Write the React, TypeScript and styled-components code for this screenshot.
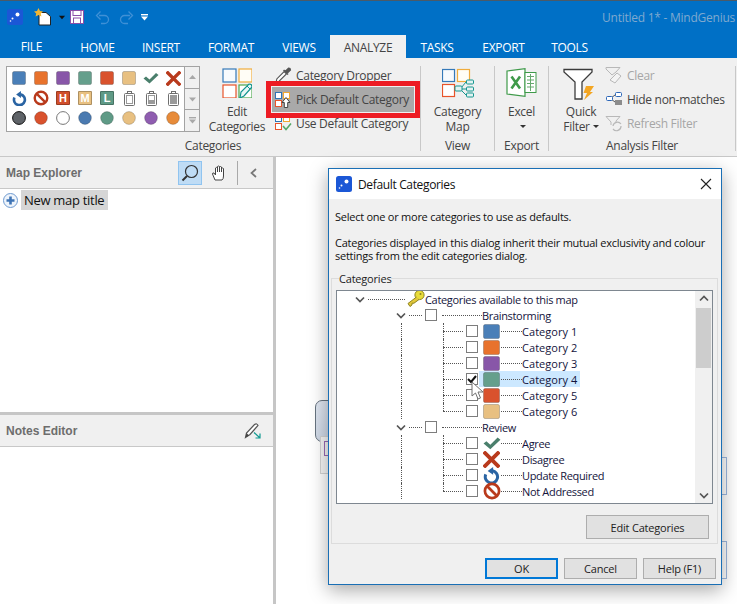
import React from 'react';
import styled, { createGlobalStyle } from 'styled-components';

const UI_FONT = '"Open Sans", "Noto Sans", "Liberation Sans", sans-serif';

// Colours
const BLUE = '#0070c6';
const PANEL = '#f0f0f0';
const RULE = '#c8c8c8';
const TEXT = '#444444';

const GlobalStyle = createGlobalStyle`
  html, body {
    margin: 0;
    padding: 0;
    background: #ffffff;
  }
  body {
    font-family: ${UI_FONT};
    font-size: 12px;
    overflow: hidden;
  }
`;

// Page frame
const Page = styled.div`
  width: 737px;
  height: 604px;
  display: flex;
  flex-direction: column;
  overflow: hidden;
`;

const TitleBar = styled.div`
  height: 35px;
  box-sizing: border-box;
  flex: none;
  background: ${BLUE};
  border-top: 1px solid #4a5a68;
  display: flex;
  align-items: center;
  padding: 0 2px 2px 7px;
`;

const QatSlot = styled.div<{ $w: number; $ml?: number }>`
  width: ${p => p.$w}px;
  margin-left: ${p => p.$ml ?? 0}px;
  display: flex;
  align-items: center;
  justify-content: center;
`;

const WindowTitle = styled.div`
  margin-left: auto;
  color: #7fa9cf;
  font-size: 12px;
  letter-spacing: -0.25px;
`;

const TabBar = styled.div`
  height: 23px;
  flex: none;
  background: ${BLUE};
  display: flex;
  padding-left: 8px;
`;

const Tab = styled.div<{ $active?: boolean; $w: number; $file?: boolean }>`
  width: ${p => p.$w}px;
  margin-right: ${p => (p.$file ? 12 : 0)}px;
  display: flex;
  align-items: center;
  justify-content: center;
  font-size: 12px;
  letter-spacing: -0.3px;
  padding: ${p => (p.$file ? '0 0 1px' : '1px 0 0')};
  color: ${p => (p.$active ? '#444' : '#fff')};
  background: ${p => (p.$active ? PANEL : 'transparent')};
`;

// Ribbon
const Ribbon = styled.div`
  height: 99px;
  flex: none;
  box-sizing: border-box;
  background: ${PANEL};
  border-bottom: 1px solid ${RULE};
  display: flex;
  padding: 8px 0 0 6px;
`;

const Group = styled.div<{ $w: number }>`
  width: ${p => p.$w}px;
  height: 85px;
  flex: none;
  display: flex;
  flex-direction: column;
  border-right: 1px solid ${RULE};
  box-sizing: border-box;
`;

const GroupBody = styled.div`
  height: 73px;
  flex: none;
  display: flex;
  align-items: flex-start;
`;

const GroupLabel = styled.div`
  text-align: center;
  font-size: 12px;
  letter-spacing: -0.3px;
  line-height: 14px;
  color: ${TEXT};
`;

const Gallery = styled.div`
  width: 194px;
  height: 66px;
  box-sizing: border-box;
  flex: none;
  border: 1px solid #a3a3a3;
  background: #fff;
  display: flex;
`;

const GalleryGrid = styled.div`
  display: grid;
  grid-template-columns: repeat(8, 22px);
  grid-auto-rows: 20px;
  padding: 1px 0 0 1px;
`;

const GalleryCell = styled.div`
  display: flex;
  align-items: center;
  justify-content: center;
`;

const GalleryScroll = styled.div`
  margin-left: auto;
  width: 15px;
  display: flex;
  flex-direction: column;
  background: ${PANEL};
  border-left: 1px solid #a3a3a3;
`;

const GalleryArrow = styled.div`
  flex: 1;
  display: flex;
  align-items: center;
  justify-content: center;
  color: #a8a8a8;
  & + & {
    border-top: 1px solid #a3a3a3;
  }
`;

const LargeButton = styled.div<{ $w: number; $ml?: number }>`
  width: ${p => p.$w}px;
  margin-left: ${p => p.$ml ?? 0}px;
  flex: none;
  display: flex;
  flex-direction: column;
  align-items: center;
  color: ${TEXT};
  font-size: 12px;
  letter-spacing: -0.3px;
  line-height: 15px;
`;

const LargeIcon = styled.div`
  height: 38px;
  box-sizing: border-box;
  padding-top: 2px;
  display: flex;
  align-items: flex-start;
  justify-content: center;
`;

const SmallColumn = styled.div<{ $w: number; $ml: number }>`
  width: ${p => p.$w}px;
  margin: -3px 0 0 ${p => p.$ml}px;
  display: flex;
  flex-direction: column;
`;

const SmallButton = styled.div<{ $disabled?: boolean; $marked?: boolean }>`
  height: 24px;
  box-sizing: border-box;
  display: flex;
  align-items: center;
  gap: 4px;
  padding-left: 3px;
  font-size: 12px;
  letter-spacing: -0.3px;
  white-space: nowrap;
  color: ${p => (p.$disabled ? '#a6a6a6' : TEXT)};
  ${p =>
    p.$marked &&
    `
    height: 27px;
    margin: -1px 0 -2px;
    padding-left: 2px;
    position: relative;
    z-index: 1;
    background: #a9a9a9;
    border: 1px solid #f0f0f0;
    box-shadow: 0 0 0 5px #ed1c24;
  `}
`;

const SmallIcon = styled.span`
  width: 18px;
  height: 18px;
  flex: none;
  display: flex;
  align-items: center;
  justify-content: center;
`;

const Caret = styled.span`
  display: inline-block;
  width: 0;
  height: 0;
  margin: 0 0 2px 3px;
  border: 3px solid transparent;
  border-top: 3px solid #333;
  border-bottom: 0;
  vertical-align: middle;
`;

// Work area
const Workspace = styled.div`
  flex: 1;
  min-height: 0;
  display: flex;
`;

const SidePanel = styled.div`
  width: 273px;
  flex: none;
  display: flex;
  flex-direction: column;
  border-right: 3px solid #c6c6c6;
`;

const PaneHeader = styled.div`
  height: 31px;
  flex: none;
  background: ${PANEL};
  border-bottom: 1px solid ${RULE};
  display: flex;
  align-items: center;
  padding-left: 6px;
`;

const PaneTitle = styled.div`
  font-family: "Liberation Sans", Arial, sans-serif;
  font-size: 12px;
  font-weight: 700;
  color: #6d6d6d;
`;

const ExplorerPane = styled.div`
  height: 255px;
  flex: none;
  background: #fff;
  border-bottom: 3px solid #c6c6c6;
`;

const ToolButton = styled.div<{ $active?: boolean; $ml: number }>`
  width: 24px;
  height: 24px;
  margin-left: ${p => p.$ml}px;
  box-sizing: border-box;
  display: flex;
  align-items: center;
  justify-content: center;
  border: 1px solid ${p => (p.$active ? '#90c4f0' : 'transparent')};
  background: ${p => (p.$active ? '#bfdcf5' : 'transparent')};
`;

const ToolDivider = styled.div`
  width: 1px;
  height: 24px;
  margin-left: 6px;
  background: #a9a9a9;
`;

const MapRow = styled.div`
  display: flex;
  align-items: center;
  height: 20px;
  margin-top: 1px;
  padding-left: 3px;
  gap: 3px;
`;

const MapLabel = styled.div`
  background: #d6d6d6;
  height: 20px;
  width: 87px;
  box-sizing: border-box;
  padding-left: 3px;
  font-size: 13px;
  letter-spacing: -0.3px;
  line-height: 20px;
  color: #111;
  white-space: nowrap;
`;

const Canvas = styled.div`
  flex: 1;
  position: relative;
  background: #fff;
`;

const MapNode = styled.div`
  position: absolute;
  left: 39px;
  top: 243px;
  width: 30px;
  height: 42px;
  box-sizing: border-box;
  border: 1px solid #67737f;
  border-radius: 7px;
  background: linear-gradient(#dfe6f1, #cfd8e6);
`;

const NodeNote = styled.div`
  position: absolute;
  left: 44px;
  top: 279px;
  width: 30px;
  height: 38px;
  box-sizing: border-box;
  border: 1px solid #d4d4d4;
  background: #f7f7f7;
  &::before {
    content: '';
    position: absolute;
    left: 3px;
    top: 4px;
    width: 10px;
    height: 13px;
    border: 1px solid #9a6bb5;
  }
`;

const SideNode = styled.div<{ $top: number }>`
  position: absolute;
  left: 430px;
  top: ${p => p.$top}px;
  width: 21px;
  height: 38px;
  box-sizing: border-box;
  border: 1px solid #9db9e0;
  border-left: 0;
  background: #fff;
`;

// Dialog
const Dialog = styled.div`
  position: absolute;
  left: 52px;
  top: 11px;
  width: 394px;
  height: 417px;
  box-sizing: border-box;
  border: 1px solid #1a6fb5;
  background: ${PANEL};
  box-shadow: 0 5px 18px rgba(0, 0, 0, 0.35);
  display: flex;
  flex-direction: column;
`;

const DialogTitle = styled.div`
  height: 30px;
  flex: none;
  background: #fff;
  display: flex;
  align-items: center;
  padding: 0 9px 0 7px;
  gap: 6px;
  font-size: 12px;
  letter-spacing: -0.35px;
  color: #111;
`;

const CloseButton = styled.div`
  margin-left: auto;
  display: flex;
`;

const DialogIntro = styled.p`
  margin: 11px 0 0 6px;
  font-size: 11px;
  letter-spacing: -0.25px;
  line-height: 13px;
  color: #111;
  white-space: pre-line;
`;

const CategoryBox = styled.fieldset`
  margin: 10px 3px 0 2px;
  padding: 0 4px 0 4px;
  height: 272px;
  flex: none;
  box-sizing: border-box;
  min-width: 0;
  border: 1px solid #dcdcdc;
  display: flex;
  flex-direction: column;
`;

const CategoryLegend = styled.legend`
  padding: 0;
  margin-left: 3px;
  font-size: 11px;
  letter-spacing: -0.2px;
  line-height: 13px;
  color: #222;
`;

const TreeFrame = styled.div`
  height: 214px;
  flex: none;
  box-sizing: border-box;
  margin-top: 5px;
  border: 1px solid #7e8790;
  background: #fff;
  display: flex;
  overflow: hidden;
  position: relative;
`;

const TreeBody = styled.div`
  flex: 1;
`;

const TreeRow = styled.div<{ $indent: number; $guides?: boolean; $last?: boolean }>`
  position: relative;
  height: 16px;
  display: flex;
  align-items: center;
  padding-left: ${p => p.$indent}px;
  font-size: 11px;
  letter-spacing: -0.33px;
  color: #14143c;
  white-space: nowrap;
  ${p =>
    p.$guides &&
    `
    &::before, &::after {
      content: '';
      position: absolute;
      top: 0;
      border-left: 1px dotted #555;
    }
    &::before {
      left: 64px;
      height: 16px;
    }
    &::after {
      left: 106px;
      height: ${p.$last ? 8 : 16}px;
    }
  `}
`;

const Dots = styled.span<{ $w: number; $ml?: number }>`
  flex: none;
  width: ${p => p.$w}px;
  margin-left: ${p => p.$ml ?? 0}px;
  border-top: 1px dotted #555;
`;

const Check = styled.span<{ $ml: number }>`
  flex: none;
  width: 12px;
  height: 12px;
  margin-left: ${p => p.$ml}px;
  box-sizing: border-box;
  border: 1px solid #7d7d7d;
  background: #fff;
  display: flex;
  align-items: center;
  justify-content: center;
  position: relative;
  z-index: 1;
`;

const RowItem = styled.span<{ $selected?: boolean }>`
  display: flex;
  align-items: center;
  height: 16px;
  margin-left: 1px;
  padding: 0 3px 0 4px;
  background: ${p => (p.$selected ? '#cce8ff' : 'transparent')};
`;

const RowIcon = styled.span`
  width: 17px;
  height: 16px;
  flex: none;
  display: flex;
  align-items: center;
  justify-content: center;
`;

const LeafLabel = styled.span<{ $wide?: boolean }>`
  letter-spacing: ${p => (p.$wide ? '0.05px' : '-0.33px')};
`;

const KeySlot = styled.span`
  margin: -2px 0 0 2px;
  flex: none;
  display: flex;
`;

const CursorMark = styled.div`
  position: absolute;
  left: 134px;
  top: 90px;
  z-index: 2;
  display: flex;
`;

const TreeScroll = styled.div`
  width: 17px;
  flex: none;
  background: ${PANEL};
  display: flex;
  flex-direction: column;
  align-items: center;
  color: #555;
`;

const TreeThumb = styled.div`
  width: 15px;
  height: 60px;
  margin-top: 2px;
  background: #cdcdcd;
`;

const ScrollEnd = styled.div<{ $bottom?: boolean }>`
  height: 15px;
  display: flex;
  align-items: center;
  justify-content: center;
  margin-top: ${p => (p.$bottom ? 'auto' : 0)};
`;

const DialogButton = styled.div<{ $w: number; $h?: number; $default?: boolean }>`
  width: ${p => p.$w}px;
  height: ${p => p.$h ?? 21}px;
  box-sizing: border-box;
  flex: none;
  display: flex;
  align-items: center;
  justify-content: center;
  background: #e1e1e1;
  border: ${p => (p.$default ? '2px solid #0078d7' : '1px solid #adadad')};
  font-size: 11px;
  letter-spacing: -0.2px;
  color: #222;
`;

const EditRow = styled.div`
  display: flex;
  justify-content: flex-end;
  margin: 11px 4px 0 0;
`;

const DialogFooter = styled.div`
  display: flex;
  justify-content: flex-end;
  gap: 6px;
  margin: 14px 5px 0 0;
`;

// Icons
const Svg: React.FC<{ s: number; h?: number; children: React.ReactNode }> = ({ s, h, children }) => (
  <svg width={s} height={h ?? s} viewBox={`0 0 ${s} ${h ?? s}`} style={{ display: 'block' }}>
    {children}
  </svg>
);

const Glyph: React.FC<{ size: number; children: React.ReactNode }> = ({ size, children }) => (
  <svg width={size} height={size} viewBox="0 0 16 16" style={{ display: 'block', flex: 'none' }}>
    {children}
  </svg>
);

const AppLogo: React.FC<{ s: number }> = ({ s }) => (
  <Glyph size={s}>
    <rect width="16" height="16" rx="2.5" fill="#1b57d6" />
    <circle cx="10.5" cy="5.5" r="2" fill="#fff" />
    <circle cx="5.5" cy="9.5" r="1" fill="#fff" />
    <circle cx="3.5" cy="12" r="0.8" fill="#fff" />
  </Glyph>
);

const Swatch: React.FC<{ color: string; w?: number; h?: number }> = ({ color, w = 14, h = 14 }) => (
  <Svg s={w} h={h}>
    <rect x="0.5" y="0.5" width={w - 1} height={h - 1} rx="1.5" fill={color} stroke="#00000033" />
  </Svg>
);

const Tick: React.FC<{ size?: number }> = ({ size = 16 }) => (
  <Glyph size={size}>
    <path d="M0.5 8.5 L3 6.5 L6.5 9.5 L13 3 L15.5 5 L6.5 13.5 Z" fill="#4a7f6c" />
  </Glyph>
);

const Cross: React.FC<{ size?: number }> = ({ size = 15 }) => (
  <Glyph size={size}>
    <path d="M2 2 L14 14 M14 2 L2 14" stroke="#b93a1c" strokeWidth="3.6" strokeLinecap="square" />
  </Glyph>
);

const Redo: React.FC<{ size?: number }> = ({ size = 15 }) => (
  <Glyph size={size}>
    <path d="M2.6 7 A5.8 5.8 0 1 0 9 3.6" fill="none" stroke="#2a64a3" strokeWidth="2.8" />
    <path d="M9.5 0 L9.5 7.4 L4.4 3.7 Z" fill="#2a64a3" />
  </Glyph>
);

const NoEntry: React.FC<{ size?: number }> = ({ size = 16 }) => (
  <Glyph size={size}>
    <circle cx="8" cy="8" r="6.3" fill="#fff" stroke="#b93a1c" strokeWidth="2.4" />
    <path d="M3.6 3.6 L12.4 12.4" stroke="#b93a1c" strokeWidth="2.4" />
  </Glyph>
);

const LetterBadge = styled.span<{ $bg: string }>`
  width: 14px;
  height: 14px;
  display: flex;
  align-items: center;
  justify-content: center;
  box-sizing: border-box;
  border: 1px solid #00000040;
  border-radius: 1px;
  background: ${p => p.$bg};
  color: #fff;
  font-family: "Liberation Sans", Arial, sans-serif;
  font-size: 11px;
  font-weight: 700;
`;

const Battery: React.FC<{ level: number }> = ({ level }) => (
  <Svg s={11} h={15}>
    <rect x="3.5" y="0.5" width="4" height="2" fill="#fff" stroke="#6f6f6f" />
    <rect x="0.5" y="2.5" width="10" height="12" rx="1" fill="#fff" stroke="#6f6f6f" />
    <rect x="2.5" y="4.5" width="6" height="8" fill="#fff" stroke="#9a9a9a" />
    {level > 0 && <rect x="3" y={13 - 8 * level} width="5" height={8 * level - 0.5} fill="#9a9a9a" />}
  </Svg>
);

const Dot: React.FC<{ color: string; ring?: string }> = ({ color, ring }) => (
  <Svg s={14}>
    <circle cx="7" cy="7" r="6.4" fill={color} stroke={ring ?? '#00000030'} />
  </Svg>
);

const SmallArrow: React.FC<{ up?: boolean; bar?: boolean; color?: string }> = ({ up, bar, color = '#a8a8a8' }) => (
  <Svg s={9} h={7}>
    {bar && <rect x="1" y="0" width="7" height="1.4" fill={color} />}
    <path d={up ? 'M4.5 1 L8 5 L1 5 Z' : bar ? 'M1 2.5 L8 2.5 L4.5 6.5 Z' : 'M1 1.5 L8 1.5 L4.5 5.5 Z'} fill={color} />
  </Svg>
);

const Chevron: React.FC<{ up?: boolean }> = ({ up }) => (
  <Svg s={10} h={7}>
    <path d={up ? 'M1 5.5 L5 1.5 L9 5.5' : 'M1 1.5 L5 5.5 L9 1.5'} fill="none" stroke="#555" strokeWidth="1.7" />
  </Svg>
);

const FourSquares: React.FC<{ s: number; pen?: boolean }> = ({ s, pen }) => (
  <svg width={s} height={s} viewBox="0 0 30 30" style={{ display: 'block' }}>
    <rect x="1" y="1" width="13" height="13" fill="#f7fafd" stroke="#3579b8" strokeWidth="1.2" />
    <rect x="17" y="1" width="13" height="13" fill="#fffdf6" stroke="#f0ac3c" strokeWidth="1.2" />
    <rect x="1" y="17" width="13" height="13" fill="#fff" stroke="#e8542a" strokeWidth="1.2" />
    {pen && (
      <>
        <rect x="17" y="17" width="13" height="13" fill="#fff" stroke="#4fa84f" strokeWidth="1.2" />
        <path d="M18 30 L19 24 L27 16 Q30 16 30 19 L22 28 Z" fill="#e8f6f6" stroke="#12958f" strokeWidth="1.2" />
        <path d="M25 18 L28 21" stroke="#12958f" />
      </>
    )}
  </svg>
);

const Dropper: React.FC = () => (
  <Glyph size={18}>
    <path d="M2 14 L2.5 11.5 L9 5 L11 7 L4.5 13.5 Z" fill="#fff" stroke="#555" />
    <path d="M8.5 3.5 L12.5 7.5 M10 5 L13 2 Q14.5 2 14.5 3.5 L11.5 6.5" fill="#555" stroke="#555" strokeWidth="1.4" />
  </Glyph>
);

const PickDefaultIcon: React.FC = () => (
  <Svg s={18}>
    <rect x="1.5" y="1.5" width="6" height="6" fill="#fff" stroke="#2f74b5" />
    <rect x="9.5" y="1.5" width="6" height="6" fill="#fff" stroke="#f0a832" />
    <rect x="1.5" y="9.5" width="6" height="6" fill="#fff" stroke="#e8542a" />
    <path d="M12 6.5 L16 11.5 L13.7 11.5 L13.7 16.5 L10.3 16.5 L10.3 11.5 L8 11.5 Z" fill="#fff" stroke="#444" />
  </Svg>
);

const UseDefaultIcon: React.FC = () => (
  <Svg s={18}>
    <rect x="1.5" y="1.5" width="6" height="6" fill="#fff" stroke="#2f74b5" />
    <rect x="9.5" y="1.5" width="6" height="6" fill="#fff" stroke="#f0a832" />
    <rect x="1.5" y="9.5" width="6" height="6" fill="#fff" stroke="#e8542a" />
    <path d="M9 12 L12 15.5 L17 9.5" fill="none" stroke="#55a868" strokeWidth="1.6" />
  </Svg>
);

const CategoryMapIcon: React.FC = () => (
  <Svg s={32}>
    <rect x="0.5" y="1.5" width="12" height="12" fill="#f7fafd" stroke="#3579b8" strokeWidth="1.2" />
    <rect x="15.5" y="1.5" width="12" height="12" fill="#fffdf6" stroke="#f0ac3c" strokeWidth="1.2" />
    <rect x="0.5" y="16.5" width="12" height="12" fill="#fff" stroke="#e8542a" strokeWidth="1.2" />
    <path d="M19 20 L24 14 M19 21 L24 21 M19 22 L24 27" stroke="#17968f" />
    <rect x="13" y="18" width="7" height="5" rx="1" fill="#e2f3f2" stroke="#17968f" />
    <rect x="24.5" y="12" width="7" height="4" rx="1" fill="#e2f3f2" stroke="#17968f" />
    <rect x="24.5" y="19" width="7" height="4" rx="1" fill="#e2f3f2" stroke="#17968f" />
    <rect x="24.5" y="25" width="7" height="4" rx="1" fill="#e2f3f2" stroke="#17968f" />
  </Svg>
);

const ExcelIcon: React.FC = () => (
  <Svg s={31} h={29}>
    <path d="M1 3 L19 0.7 V28.3 L1 26 Z" fill="#fff" stroke="#3f9a4a" strokeWidth="1.2" />
    <rect x="19" y="4.5" width="11" height="20" fill="#fff" stroke="#3f9a4a" />
    <path d="M21 8.5 H28 M21 12 H28 M21 15.5 H28 M21 19 H28 M24.5 6 V23" stroke="#65a96d" />
    <path d="M5.5 8.5 L14 20.5 M14 8.5 L5.5 20.5" stroke="#3f9a4a" strokeWidth="2.6" />
  </Svg>
);

const FunnelIcon: React.FC = () => (
  <Svg s={36} h={32}>
    <path d="M1 1.5 H29 V4 L19 14 V31 H12 V14 L1 4 Z" fill="#fff" stroke="#3c3c3c" strokeWidth="1.3" />
    <path d="M23 18 H31 L27 24 H30 L21 32 L24 25 H20.5 Z" fill="#f4a622" />
  </Svg>
);

const ClearIcon: React.FC = () => (
  <Svg s={18}>
    <path d="M1 1.5 H15 L11 6 L7 9 L1 3 Z" fill="none" stroke="#b8b8b8" />
    <path d="M5 14 L12 7 L16 10 L10 17 Z" fill="#f4f4f4" stroke="#b8b8b8" />
  </Svg>
);

const HideIcon: React.FC = () => (
  <Svg s={18}>
    <path d="M6 8 L10 5 M6 9 L10 12" stroke="#555" />
    <rect x="1.5" y="6.5" width="6" height="4" rx="1" fill="#fff" stroke="#2c66b8" />
    <rect x="10.5" y="2.5" width="6" height="4" rx="1" fill="#fff" stroke="#2c66b8" />
    <rect x="10" y="10" width="7" height="5" fill="#8c8c8c" />
  </Svg>
);

const RefreshIcon: React.FC = () => (
  <Svg s={18}>
    <path d="M1 2.5 H15 L11 7 V9 M1 2.5 L6 8 V11" fill="none" stroke="#b8b8b8" />
    <path d="M8 12 A4.5 4.5 0 0 1 16 10 M16 12 A4.5 4.5 0 0 1 8 15" fill="none" stroke="#b8b8b8" strokeWidth="1.2" />
  </Svg>
);

const KeyIcon: React.FC = () => (
  <Svg s={18} h={17}>
    <circle cx="12.5" cy="5" r="4.6" fill="#e8dc3a" stroke="#8f8420" />
    <path d="M9.5 7 L1 13.5 L3 16.5 L5 15 L5 13.2 L7 13.2 L12 9.5" fill="#e2c83a" stroke="#8f8420" />
    <circle cx="13.5" cy="4" r="1" fill="#8f8420" />
  </Svg>
);

const CursorIcon: React.FC = () => (
  <Svg s={14} h={20}>
    <path d="M1 1 L1 15 L4.5 12 L7 18 L9.5 17 L7 11 L12 11 Z" fill="#fff" stroke="#707070" />
  </Svg>
);

const CheckGlyph: React.FC = () => (
  <Svg s={10}>
    <path d="M1 5 L4 8 L9 2" fill="none" stroke="#111" strokeWidth="2" />
  </Svg>
);

// Data
const SQUARE_COLORS = ['#4a7fb8', '#e8722c', '#8856a8', '#659f8c', '#d9522d', '#e8c081'];
const DOT_COLORS = ['#d9522d', '#ffffff', '#4a7ab0', '#5f9a86', '#e8c081', '#8f5db0', '#e78b3a'];

const CATEGORY_NAMES = ['Category 1', 'Category 2', 'Category 3', 'Category 4', 'Category 5', 'Category 6'];

const REVIEW_ITEMS: { label: string; icon: React.ReactNode }[] = [
  { label: 'Agree', icon: <Tick size={18} /> },
  { label: 'Disagree', icon: <Cross size={17} /> },
  { label: 'Update Required', icon: <Redo size={17} /> },
  { label: 'Not Addressed', icon: <NoEntry size={18} /> },
];

const LeafRow: React.FC<{
  label: string;
  icon: React.ReactNode;
  last?: boolean;
  selected?: boolean;
  wide?: boolean;
}> = ({ label, icon, last, selected, wide }) => (
  <TreeRow $indent={106} $guides $last={last}>
    <Dots $w={20} />
    <Check $ml={3}>{selected && <CheckGlyph />}</Check>
    <RowItem $selected={selected}>
      <RowIcon>{icon}</RowIcon>
      <Dots $w={21} $ml={1} />
      <LeafLabel $wide={wide}>{label}</LeafLabel>
    </RowItem>
  </TreeRow>
);

const BranchRow: React.FC<{ label: string }> = ({ label }) => (
  <TreeRow $indent={59}>
    <Chevron />
    <Dots $w={13} $ml={3} />
    <Check $ml={3} />
    <Dots $w={40} $ml={5} />
    {label}
  </TreeRow>
);

const App: React.FC = () => (
  <Page>
    <GlobalStyle />
    <TitleBar>
      <AppLogo s={16} />
      <QatSlot $w={18} $ml={11}>
        <Svg s={18}>
          <path d="M5 4.5 H12 L16.5 8.5 V17 H5 Z" fill="#fff" stroke="#222" />
          <path d="M4.5 0 L6 3 L9 3.4 L6.8 5.5 L7.4 8.6 L4.5 7 L1.6 8.6 L2.2 5.5 L0 3.4 L3 3 Z" fill="#f2b632" />
        </Svg>
      </QatSlot>
      <QatSlot $w={8} $ml={6}>
        <SmallArrow color="#111" />
      </QatSlot>
      <QatSlot $w={14} $ml={4}>
        <Svg s={14}>
          <rect x="0.5" y="0.5" width="13" height="13" fill="#fff" stroke="#8a4fa8" />
          <rect x="3" y="0.5" width="8" height="5" fill="#fff" stroke="#8a4fa8" />
          <rect x="3.5" y="8" width="7" height="5.5" fill="#fff" stroke="#8a4fa8" />
        </Svg>
      </QatSlot>
      <QatSlot $w={15} $ml={11}>
        <Svg s={15}>
          <path d="M4 5.5 H9.5 A4 4 0 0 1 9.5 13.5 H6" fill="none" stroke="#3f90d6" strokeWidth="1.3" />
          <path d="M5.5 1.5 L1.5 5.5 L5.5 9.5" fill="none" stroke="#3f90d6" strokeWidth="1.3" />
        </Svg>
      </QatSlot>
      <QatSlot $w={15} $ml={9}>
        <Svg s={15}>
          <path d="M11 5.5 H5.5 A4 4 0 0 0 5.5 13.5 H9" fill="none" stroke="#3f90d6" strokeWidth="1.3" />
          <path d="M9.5 1.5 L13.5 5.5 L9.5 9.5" fill="none" stroke="#3f90d6" strokeWidth="1.3" />
        </Svg>
      </QatSlot>
      <QatSlot $w={9} $ml={6}>
        <SmallArrow bar color="#fff" />
      </QatSlot>
      <WindowTitle>Untitled 1* - MindGenius</WindowTitle>
    </TitleBar>

    <TabBar>
      <Tab $w={47} $file>FILE</Tab>
      <Tab $w={61}>HOME</Tab>
      <Tab $w={66}>INSERT</Tab>
      <Tab $w={74}>FORMAT</Tab>
      <Tab $w={62}>VIEWS</Tab>
      <Tab $w={76} $active>ANALYZE</Tab>
      <Tab $w={62}>TASKS</Tab>
      <Tab $w={71}>EXPORT</Tab>
      <Tab $w={61}>TOOLS</Tab>
    </TabBar>

    <Ribbon>
      <Group $w={415}>
        <GroupBody>
          <Gallery>
            <GalleryGrid>
              {SQUARE_COLORS.map(c => (
                <GalleryCell key={c}><Swatch color={c} /></GalleryCell>
              ))}
              <GalleryCell><Tick /></GalleryCell>
              <GalleryCell><Cross /></GalleryCell>
              <GalleryCell><Redo /></GalleryCell>
              <GalleryCell><NoEntry /></GalleryCell>
              <GalleryCell><LetterBadge $bg="#d14f2c">H</LetterBadge></GalleryCell>
              <GalleryCell><LetterBadge $bg="#e8c081">M</LetterBadge></GalleryCell>
              <GalleryCell><LetterBadge $bg="#5f9a86">L</LetterBadge></GalleryCell>
              <GalleryCell><Battery level={0} /></GalleryCell>
              <GalleryCell><Battery level={0.5} /></GalleryCell>
              <GalleryCell><Battery level={1} /></GalleryCell>
              <GalleryCell><Dot color="#5f6368" ring="#111" /></GalleryCell>
              {DOT_COLORS.map(c => (
                <GalleryCell key={c}>
                  <Dot color={c} ring={c === '#ffffff' ? '#777' : undefined} />
                </GalleryCell>
              ))}
            </GalleryGrid>
            <GalleryScroll>
              <GalleryArrow><SmallArrow up /></GalleryArrow>
              <GalleryArrow><SmallArrow /></GalleryArrow>
              <GalleryArrow><SmallArrow bar /></GalleryArrow>
            </GalleryScroll>
          </Gallery>
          <LargeButton $w={58} $ml={8}>
            <LargeIcon><FourSquares s={30} pen /></LargeIcon>
            <span>Edit</span>
            <span>Categories</span>
          </LargeButton>
          <SmallColumn $w={144} $ml={5}>
            <SmallButton><SmallIcon><Dropper /></SmallIcon>Category Dropper</SmallButton>
            <SmallButton $marked><SmallIcon><PickDefaultIcon /></SmallIcon>Pick Default Category</SmallButton>
            <SmallButton><SmallIcon><UseDefaultIcon /></SmallIcon>Use Default Category</SmallButton>
          </SmallColumn>
        </GroupBody>
        <GroupLabel>Categories</GroupLabel>
      </Group>

      <Group $w={74}>
        <GroupBody>
          <LargeButton $w={73}>
            <LargeIcon><CategoryMapIcon /></LargeIcon>
            <span>Category</span>
            <span>Map</span>
          </LargeButton>
        </GroupBody>
        <GroupLabel>View</GroupLabel>
      </Group>

      <Group $w={54}>
        <GroupBody>
          <LargeButton $w={53}>
            <LargeIcon><ExcelIcon /></LargeIcon>
            <span>Excel</span>
            <span><Caret /></span>
          </LargeButton>
        </GroupBody>
        <GroupLabel>Export</GroupLabel>
      </Group>

      <Group $w={187}>
        <GroupBody>
          <LargeButton $w={40} $ml={12}>
            <LargeIcon><FunnelIcon /></LargeIcon>
            <span>Quick</span>
            <span>Filter<Caret /></span>
          </LargeButton>
          <SmallColumn $w={130} $ml={1}>
            <SmallButton $disabled><SmallIcon><ClearIcon /></SmallIcon>Clear</SmallButton>
            <SmallButton><SmallIcon><HideIcon /></SmallIcon>Hide non-matches</SmallButton>
            <SmallButton $disabled><SmallIcon><RefreshIcon /></SmallIcon>Refresh Filter</SmallButton>
          </SmallColumn>
        </GroupBody>
        <GroupLabel>Analysis Filter</GroupLabel>
      </Group>
    </Ribbon>

    <Workspace>
      <SidePanel>
        <ExplorerPane>
          <PaneHeader>
            <PaneTitle>Map Explorer</PaneTitle>
            <ToolButton $active $ml={96}>
              <Svg s={18}>
                <circle cx="10.5" cy="7.5" r="6" fill="none" stroke="#333" strokeWidth="1.2" />
                <path d="M6 12 L1.5 16.5" stroke="#333" strokeWidth="2" />
              </Svg>
            </ToolButton>
            <ToolButton $ml={5}>
              <Svg s={16}>
                <path
                  d="M4 15 L1.5 9 Q1.5 7.5 3 8 L4.5 10 V3 Q5.5 1.8 6.5 3 V7 V1.5 Q7.5 0.5 8.5 1.5 V7 V2 Q9.5 1 10.5 2 V7 V3.5 Q11.5 2.5 12.5 3.5 V11 Q12.5 14 11 15 Z"
                  fill="#fff"
                  stroke="#444"
                />
              </Svg>
            </ToolButton>
            <ToolDivider />
            <ToolButton $ml={4}>
              <Svg s={10}>
                <path d="M7 1 L2.5 5 L7 9" fill="none" stroke="#777" strokeWidth="1.7" />
              </Svg>
            </ToolButton>
          </PaneHeader>
          <MapRow>
            <Svg s={15}>
              <circle cx="7.5" cy="7.5" r="7" fill="#eef4fb" stroke="#6f9ad0" />
              <path d="M7.5 3.5 V11.5 M3.5 7.5 H11.5" stroke="#3f74b5" strokeWidth="2.6" />
            </Svg>
            <MapLabel>New map title</MapLabel>
          </MapRow>
        </ExplorerPane>
        <PaneHeader>
          <PaneTitle>Notes Editor</PaneTitle>
          <ToolButton $ml={164}>
            <Svg s={18}>
              <path d="M1.5 15.5 L2.5 11 L10.5 2.5 Q13 1 14 3.5 L6 12.5 Z" fill="#fff" stroke="#555" strokeWidth="1.2" />
              <path d="M1.5 15.5 L2.5 11 L5 13.5 Z" fill="#444" />
              <path d="M10 10.5 L15.5 15.5 M11.5 16 H16 V11.5" fill="none" stroke="#109a92" strokeWidth="1.2" />
            </Svg>
          </ToolButton>
        </PaneHeader>
      </SidePanel>

      <Canvas>
        <MapNode />
        <NodeNote />
        <SideNode $top={300} />
        <SideNode $top={384} />
        <Dialog>
          <DialogTitle>
            <AppLogo s={16} />
            Default Categories
            <CloseButton>
              <Svg s={12}>
                <path d="M1 1 L11 11 M11 1 L1 11" stroke="#222" strokeWidth="1.1" />
              </Svg>
            </CloseButton>
          </DialogTitle>
          <DialogIntro>
            {'Select one or more categories to use as defaults.\n\nCategories displayed in this dialog inherit their mutual exclusivity and colour\nsettings from the edit categories dialog.'}
          </DialogIntro>
          <CategoryBox>
            <CategoryLegend>Categories</CategoryLegend>
            <TreeFrame>
              <TreeBody>
                <TreeRow $indent={18}>
                  <Chevron />
                  <Dots $w={37} $ml={3} />
                  <KeySlot><KeyIcon /></KeySlot>
                  Categories available to this map
                </TreeRow>
                <BranchRow label="Brainstorming" />
                {CATEGORY_NAMES.map((name, i) => (
                  <LeafRow
                    key={name}
                    label={name}
                    icon={<Swatch color={SQUARE_COLORS[i]} w={17} h={15} />}
                    selected={i === 3}
                    last={i === 5}
                    wide
                  />
                ))}
                <BranchRow label="Review" />
                {REVIEW_ITEMS.map((item, i) => (
                  <LeafRow key={item.label} label={item.label} icon={item.icon} last={i === 3} />
                ))}
              </TreeBody>
              <TreeScroll>
                <ScrollEnd><Chevron up /></ScrollEnd>
                <TreeThumb />
                <ScrollEnd $bottom><Chevron /></ScrollEnd>
              </TreeScroll>
              <CursorMark><CursorIcon /></CursorMark>
            </TreeFrame>
            <EditRow>
              <DialogButton $w={123} $h={24}>Edit Categories</DialogButton>
            </EditRow>
          </CategoryBox>
          <DialogFooter>
            <DialogButton $w={73} $default>OK</DialogButton>
            <DialogButton $w={73}>Cancel</DialogButton>
            <DialogButton $w={73}>Help (F1)</DialogButton>
          </DialogFooter>
        </Dialog>
      </Canvas>
    </Workspace>
  </Page>
);

export default App;
